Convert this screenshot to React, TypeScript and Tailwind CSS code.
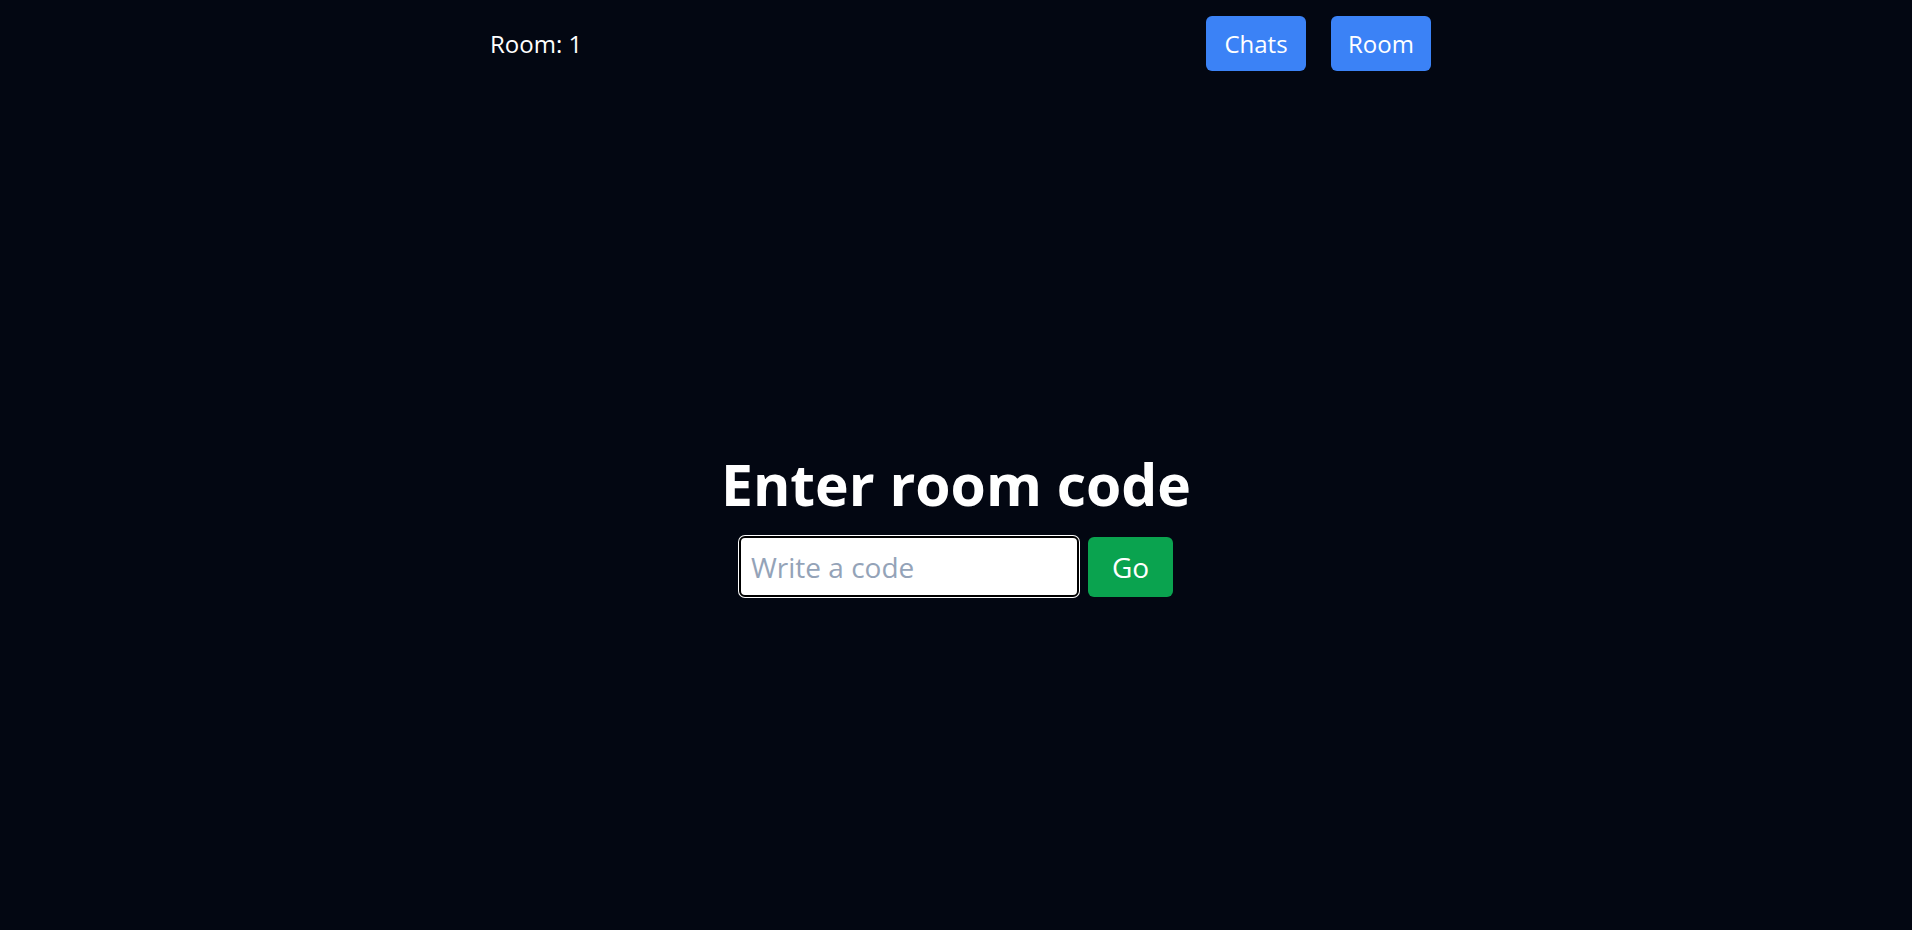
export default function App() {
  return (
    <div className="min-h-screen bg-[#030712] font-['Open_Sans',sans-serif] text-white">
      <header className="mx-auto flex w-[950px] items-start justify-between pt-4 pl-[9px]">
        <span className="mt-[12px] text-[24px] leading-[32px]">Room: 1</span>
        <nav className="flex gap-[25px]">
          <button className="h-[55px] w-[100px] rounded-md bg-[#3b82f6] text-[24px] text-white">
            Chats
          </button>
          <button className="h-[55px] w-[100px] rounded-md bg-[#3b82f6] text-[24px] text-white">
            Room
          </button>
        </nav>
      </header>
      <main className="flex flex-col items-center pt-[385px]">
        <h1 className="text-[57px] font-bold leading-[56px]">Enter room code</h1>
        <div className="mt-[24px] flex items-center gap-[9px]">
          <input
            type="text"
            placeholder="Write a code"
            className="h-[61px] w-[340px] rounded-md border-2 border-black bg-white px-[10px] text-[28px] text-black shadow-[0_0_0_1px_white] outline-none placeholder:text-[#94a3b8]"
          />
          <button className="h-[60px] w-[85px] rounded-md bg-[#0aa34f] text-[28px] text-white">
            Go
          </button>
        </div>
      </main>
    </div>
  );
}
